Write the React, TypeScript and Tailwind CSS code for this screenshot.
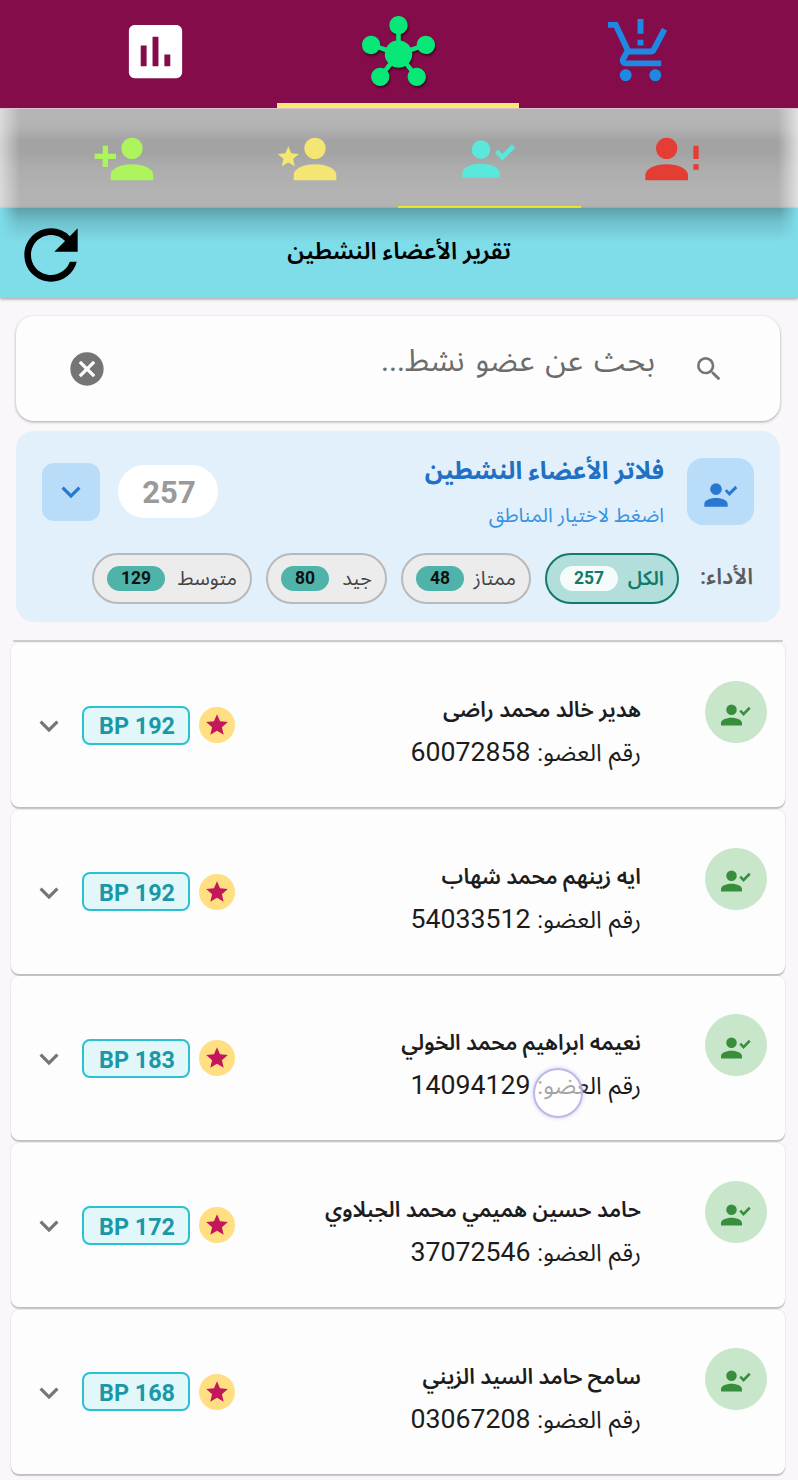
import React from "react";
import {
  MdAssessment,
  MdCancel,
  MdExpandMore,
  MdHub,
  MdProductionQuantityLimits,
  MdRefresh,
  MdSearch,
  MdStar,
} from "react-icons/md";

interface Member {
  name: string;
  id: string;
  points: number;
}

const members: Member[] = [
  { name: "هدير خالد محمد راضى", id: "60072858", points: 192 },
  { name: "ايه زينهم محمد شهاب", id: "54033512", points: 192 },
  { name: "نعيمه ابراهيم محمد الخولي", id: "14094129", points: 183 },
  { name: "حامد حسين هميمي محمد الجبلاوي", id: "37072546", points: 172 },
  { name: "سامح حامد السيد الزيني", id: "03067208", points: 168 },
];

const iconPaths = {
  add: "M15,14C10.58,14 7,15.79 7,18V20H23V18C23,15.79 19.42,14 15,14M6,10V7H4V10H1V12H4V15H6V12H9V10M15,12A4,4 0 0,0 19,8A4,4 0 0,0 15,4A4,4 0 0,0 11,8A4,4 0 0,0 15,12Z",
  star: "M15,14C10.58,14 7,15.79 7,18V20H23V18C23,15.79 19.42,14 15,14M15,12A4,4 0 0,0 19,8A4,4 0 0,0 15,4A4,4 0 0,0 11,8A4,4 0 0,0 15,12M5,13.28L7.45,14.77L6.8,11.96L9,10.08L6.11,9.83L5,7.19L3.87,9.83L1,10.08L3.18,11.96L2.5,14.77L5,13.28Z",
  check:
    "M9,5A3.5,3.5 0 0,1 12.5,8.5A3.5,3.5 0 0,1 9,12A3.5,3.5 0 0,1 5.5,8.5A3.5,3.5 0 0,1 9,5M9,13.75C12.87,13.75 16,15.32 16,17.25V19H2V17.25C2,15.32 5.13,13.75 9,13.75M17,12.66L14.25,9.66L15.41,8.5L17,10.09L20.59,6.5L21.75,7.91L17,12.66",
  alert:
    "M10,4A4,4 0 0,1 14,8A4,4 0 0,1 10,12A4,4 0 0,1 6,8A4,4 0 0,1 10,4M10,14C14.42,14 18,15.79 18,18V20H2V18C2,15.79 5.58,14 10,14M20,12V7H22V12H20M20,16V14H22V16H20Z",
};

const AccountIcon: React.FC<{
  kind: keyof typeof iconPaths;
  className?: string;
}> = ({ kind, className = "" }) => (
  <svg viewBox="0 0 24 24" fill="currentColor" className={className}>
    <path d={iconPaths[kind]} />
  </svg>
);

const TopTabs: React.FC = () => (
  <nav className="grid h-[109px] grid-cols-3 border-b border-[#d8c4cd] bg-[#850c4b] pr-[36px] pl-[34px]">
    <div className="flex items-center justify-center pb-[5px]">
      <MdAssessment className="size-[71px] text-white" />
    </div>
    <div className="flex items-center justify-center border-b-[5px] border-[#fdea75] pt-px pl-px">
      <MdHub className="size-[73px] text-[#08e878] drop-shadow-[1px_2px_1px_rgba(0,0,0,0.5)]" />
    </div>
    <div className="flex items-center justify-center pb-[5px]">
      <MdProductionQuantityLimits className="size-[71px] text-[#1e88e5]" />
    </div>
  </nav>
);

const SubTabs: React.FC = () => (
  <nav className="h-[99px] bg-[linear-gradient(to_bottom,#b6b6b6_0,#b3b3b3_18%,#a3a3a3_32%,#a3a3a3_44%,#adadad_60%,#b3b3b3_85%,#b3b3b3_100%)]">
    <div className="grid h-full grid-cols-4 bg-[linear-gradient(to_right,rgba(240,240,240,0.65)_0,transparent_20px,transparent_778px,rgba(240,240,240,0.75)_798px)] pr-[35px] pl-[33px]">
      <div className="flex items-center justify-center pt-px">
        <AccountIcon kind="add" className="size-16 text-[#aef45c]" />
      </div>
      <div className="flex items-center justify-center pt-px">
        <AccountIcon kind="star" className="size-16 text-[#f5e572]" />
      </div>
      <div className="flex items-center justify-center border-b-2 border-[#f5ee2c] pt-[3px]">
        <AccountIcon kind="check" className="size-16 text-[#5ae8dc]" />
      </div>
      <div className="flex items-center justify-center pt-px">
        <AccountIcon kind="alert" className="size-16 text-[#e43d33]" />
      </div>
    </div>
  </nav>
);

const ReportHeader: React.FC = () => (
  <header className="grid h-[90px] grid-cols-[1fr_auto_1fr] items-center bg-[#7fdce9] bg-[linear-gradient(to_right,#7fdce9_0,transparent_18px,transparent_780px,#7fdce9_798px),linear-gradient(to_bottom,rgba(0,0,0,0.27)_0,rgba(0,0,0,0.12)_14px,transparent_34px)] px-3 shadow-[0_1px_3px_rgba(0,0,0,0.4)]">
    <MdRefresh className="-ml-px mt-[3px] size-20 text-black" />
    <h1 dir="rtl" className="pb-[3px] text-[23.7px] font-semibold text-black">
      تقرير الأعضاء النشطين
    </h1>
  </header>
);

const SearchBox: React.FC = () => (
  <div
    dir="rtl"
    className="mr-[18px] ml-4 mt-[18px] flex h-[105px] items-center rounded-[18px] bg-[#fdfdfd] pr-[55px] pl-[51px] shadow-[0_1px_3px_rgba(0,0,0,0.35)]"
  >
    <MdSearch className="size-8 text-[#757575]" />
    <span className="mr-[38px] flex-1 pb-[15px] text-[30.5px] [word-spacing:3.5px] text-[#6c6c6c]">
      بحث عن عضو نشط<span className="tracking-[3px]">...</span>
    </span>
    <MdCancel className="size-10 text-[#757575]" />
  </div>
);

const Chip: React.FC<{
  label: string;
  count: number;
  active?: boolean;
  className?: string;
}> = ({ label, count, active = false, className = "" }) => (
  <div
    className={`flex h-[51px] items-center justify-between rounded-full border-2 px-[13px] ${
      active
        ? "border-[#12796c] bg-[#b2dfdb] font-semibold text-[#12796c]"
        : "border-[#b9b9b9] bg-[#ececec] text-[#444]"
    } ${className}`}
  >
    <span className="text-[19.9px]">{label}</span>
    <span
      className={`flex h-[25px] items-center rounded-full px-3.5 text-[17.5px] font-bold ${
        active ? "bg-[#f5fbfa]" : "bg-[#4fb3a9] text-[#111]"
      }`}
    >
      {count}
    </span>
  </div>
);

const FilterPanel: React.FC = () => (
  <section
    dir="rtl"
    className="mr-[18px] ml-4 mt-[10px] h-[191px] rounded-[18px] bg-[#e1f0fb] px-[26px] pt-[27px]"
  >
    <div className="flex h-[67px] items-center">
      <div className="flex size-[67px] items-center justify-center rounded-2xl bg-[#b9dcf8] pt-[7px]">
        <AccountIcon kind="check" className="size-10 text-[#2877d0]" />
      </div>
      <div className="mr-[23px] flex-1 pt-0.5">
        <h2 className="text-[24.7px] leading-[44px] font-bold text-[#2170c4]">
          فلاتر الأعضاء النشطين
        </h2>
        <p className="text-[20px] leading-[44px] text-[#3b92e0]">
          اضغط لاختيار المناطق
        </p>
      </div>
      <span className="flex h-[53px] w-[100px] items-center justify-center rounded-full bg-white pt-[3px] pl-0.5 text-[31px] font-bold text-[#9a9a9a]">
        257
      </span>
      <div className="mr-[18px] flex size-[58px] items-center justify-center rounded-xl bg-[#b9dcf8]">
        <MdExpandMore className="size-[38px] text-[#2877d0]" />
      </div>
    </div>
    <div className="mt-[28px] flex items-center gap-3.5 pr-px">
      <span className="ml-1.5 w-[54px] pb-1 text-[22.5px] font-semibold text-[#5c5c5c]">
        الأداء:
      </span>
      <Chip label="الكل" count={257} active className="w-[134px]" />
      <Chip label="ممتاز" count={48} className="w-[130px]" />
      <Chip label="جيد" count={80} className="w-[121px]" />
      <Chip label="متوسط" count={129} className="w-[160px]" />
    </div>
  </section>
);

const MemberCard: React.FC<{ member: Member; touched?: boolean }> = ({
  member,
  touched = false,
}) => (
  <li className="relative flex h-[164px] shrink-0 rounded-[8px] bg-[#fdfdfd] pr-[18px] pl-[19px] shadow-[0_2px_1px_rgba(0,0,0,0.2),0_0_2px_rgba(0,0,0,0.14)]">
    <div className="mt-[38px] flex size-[62px] items-center justify-center rounded-full bg-[#c8e6c9] pt-[5px]">
      <AccountIcon kind="check" className="size-9 text-[#388e3c]" />
    </div>
    <div className="mr-[64px] flex-1 pt-[45px] text-[#1c1c1c]">
      <p className="text-[21.6px] leading-[43px] font-semibold">
        {member.name}
      </p>
      <p className="text-[24px] leading-[43px] [word-spacing:1px]">
        رقم العضو: <span className="text-[26.7px]">{member.id}</span>
      </p>
    </div>
    <div className="flex items-center">
      <span className="flex size-9 items-center justify-center rounded-full bg-[#ffdf82]">
        <MdStar className="size-[26px] text-[#c2185b]" />
      </span>
      <span
        dir="ltr"
        className="mr-[9px] flex h-[39px] w-[108px] items-center justify-center rounded-lg border-2 border-[#2bc0d2] bg-[#e2f7fa] pt-1 pl-0.5 text-[23.4px] font-bold text-[#1a98a7]"
      >
        BP {member.points}
      </span>
      <MdExpandMore className="mt-0.5 mr-[14px] size-[38px] text-[#757575]" />
    </div>
    {touched && (
      <span className="absolute top-[92px] left-[522px] size-[50px] rounded-full border-2 border-[#bcb8e6] bg-white/60 shadow-[0_0_4px_#cfc8f4]" />
    )}
  </li>
);

export default function App() {
  return (
    <div className="flex h-[1480px] w-[798px] flex-col overflow-hidden bg-[#faf7fb] font-[Roboto,'Noto_Sans_Arabic','DejaVu_Sans',sans-serif]">
      <TopTabs />
      <SubTabs />
      <ReportHeader />
      <SearchBox />
      <FilterPanel />
      <div className="mr-[15px] ml-[13px] mt-[17.5px] h-0.5 shrink-0 rounded-full bg-[#cdcbce]" />
      <ul dir="rtl" className="mr-[13px] ml-[11px] mt-[1.5px] flex flex-col gap-[2.7px]">
        {members.map((member, index) => (
          <MemberCard key={member.id} member={member} touched={index === 2} />
        ))}
      </ul>
    </div>
  );
}
